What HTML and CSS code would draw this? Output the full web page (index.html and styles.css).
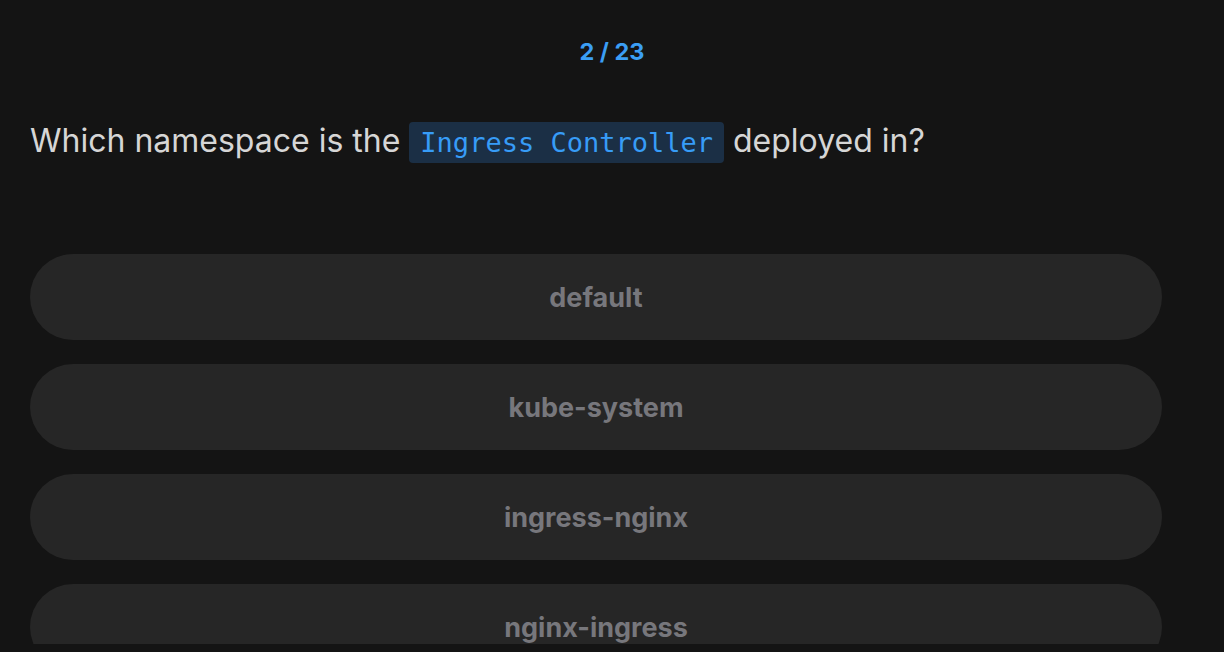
FILE: index.html
```html
<!DOCTYPE html>
<html lang="en">
<head>
<meta charset="utf-8">
<title>Quiz</title>
<link rel="stylesheet" href="styles.css">
</head>
<body>
<main class="screen">
  <div class="counter">2 / 23</div>
  <h1 class="question">Which namespace is the <code class="code">Ingress Controller</code> deployed in?</h1>
  <ul class="options">
    <li class="option">default</li>
    <li class="option">kube-system</li>
    <li class="option">ingress-nginx</li>
    <li class="option">nginx-ingress</li>
  </ul>
</main>
</body>
</html>
```
FILE: styles.css
```css
html, body {
  margin: 0;
  padding: 0;
  background: #141414;
}
body {
  font-family: Inter, "Noto Sans", sans-serif;
}
.screen {
  height: 644px;
  overflow: hidden;
  display: flex;
  flex-direction: column;
}
.counter {
  padding-top: 36px;
  text-align: center;
  font-size: 23.5px;
  line-height: 32px;
  font-weight: 700;
  color: #3b9ef5;
}
.question {
  margin: 49px 0 0;
  padding: 0 30px;
  font-size: 32px;
  line-height: 48px;
  font-weight: 400;
  color: #d6d6d6;
}
.code {
  font-family: "DejaVu Sans Mono", "Liberation Mono", monospace;
  font-size: 27px;
  color: #379cf7;
  background: #1b2f45;
  padding: 5px 11px;
  border-radius: 4px;
}
.options {
  list-style: none;
  margin: 87px 0 0;
  padding: 0 62px 0 30px;
  display: flex;
  flex-direction: column;
  gap: 24px;
}
.option {
  height: 86px;
  border-radius: 43px;
  background: #262626;
  display: flex;
  align-items: center;
  justify-content: center;
  font-size: 27px;
  font-weight: 700;
  color: #77777c;
  flex-shrink: 0;
}
```
